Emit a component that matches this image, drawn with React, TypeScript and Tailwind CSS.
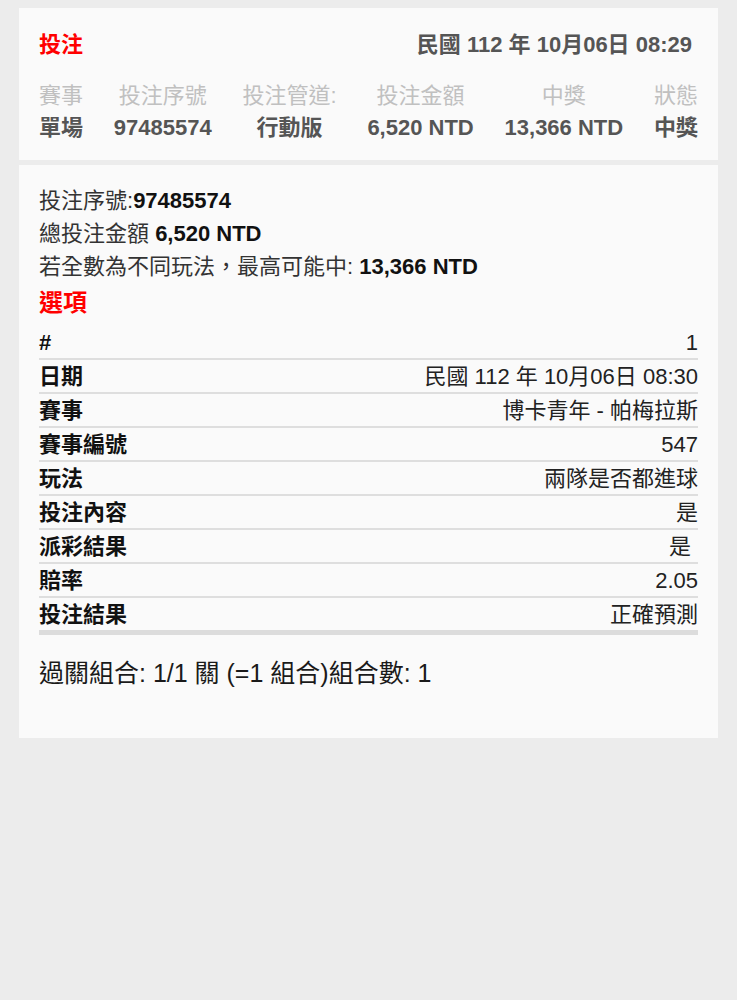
const font = "font-['Liberation_Sans','Noto_Sans_CJK_TC',sans-serif]";

const summary = [
  { label: "賽事", value: "單場" },
  { label: "投注序號", value: "97485574" },
  { label: "投注管道:", value: "行動版" },
  { label: "投注金額", value: "6,520 NTD" },
  { label: "中獎", value: "13,366 NTD" },
  { label: "狀態", value: "中獎" },
];

const rows = [
  { label: "#", value: "1" },
  { label: "日期", value: "民國 112 年 10月06日 08:30" },
  { label: "賽事", value: "博卡青年 - 帕梅拉斯" },
  { label: "賽事編號", value: "547" },
  { label: "玩法", value: "兩隊是否都進球" },
  { label: "投注內容", value: "是" },
  { label: "派彩結果", value: "是", indent: true },
  { label: "賠率", value: "2.05" },
  { label: "投注結果", value: "正確預測" },
];

export default function App() {
  return (
    <div className={`min-h-screen bg-[#ececec] px-[19px] pt-[8px] ${font}`}>
      <div className="bg-[#fafafa] px-[20px] pt-[23px] pb-[16px]">
        <div className="flex items-center justify-between text-[22px] font-bold leading-[28px]">
          <span className="text-[#ff0000]">投注</span>
          <span className="mr-[6px] text-[#555]">民國 112 年 10月06日 08:29</span>
        </div>
        <div className="mt-[21px] flex justify-between text-[22px] leading-[32px]">
          {summary.map(({ label, value }) => (
            <div key={label} className="flex flex-col items-center text-center">
              <span className="text-[#c0c0c0]">{label}</span>
              <span className="font-bold text-[#555]">{value}</span>
            </div>
          ))}
        </div>
      </div>

      <div className="mt-[5px] bg-[#fafafa] px-[20px] pt-[19px] pb-[49px]">
        <div className="text-[22px] leading-[33px] text-[#333]">
          <p>
            投注序號:<b className="text-[#111]">97485574</b>
          </p>
          <p>
            總投注金額 <b className="text-[#111]">6,520 NTD</b>
          </p>
          <p>
            若全數為不同玩法，最高可能中: <b className="text-[#111]">13,366 NTD</b>
          </p>
        </div>
        <h3 className="mt-[2px] text-[24px] font-bold leading-[36px] text-[#ff0000]">選項</h3>

        <div className="mt-[5px]">
          {rows.map(({ label, value, indent }, i) => (
            <div
              key={label + i}
              className={`flex h-[32px] items-center justify-between text-[22px] ${
                i < rows.length - 1 ? "box-content border-b-2 border-[#dedede]" : ""
              }`}
            >
              <span className="font-bold text-[#111]">{label}</span>
              <span className={`text-[#222] ${indent ? "mr-[7px]" : ""}`}>{value}</span>
            </div>
          ))}
          <div className="h-[5px] bg-[#dcdcdc]" />
        </div>

        <p className="mt-[22px] text-[25px] leading-[32px] text-[#1a1a1a]">
          過關組合: 1/1 關 (=1 組合)組合數: 1
        </p>
      </div>
    </div>
  );
}
